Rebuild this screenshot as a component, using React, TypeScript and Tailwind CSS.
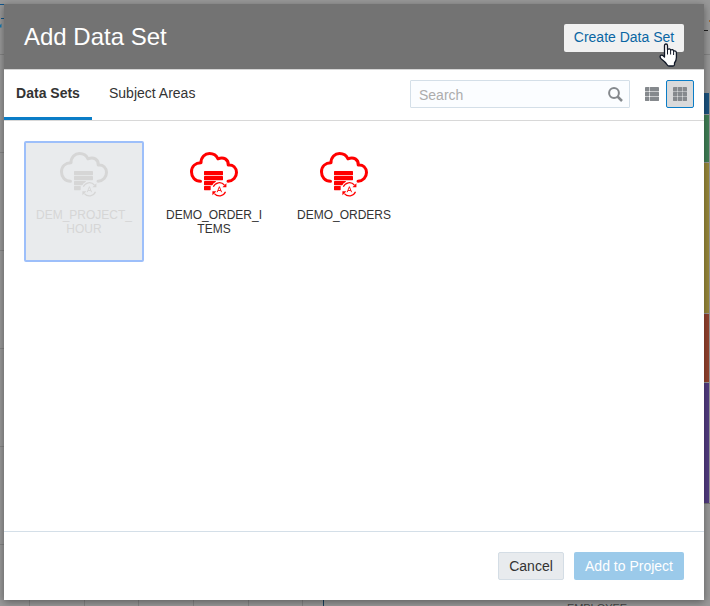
import React from "react";

const FONT = "font-['Liberation_Sans',Arial,sans-serif]";

function CloudIcon() {
  return (
    <svg width="50" height="47" viewBox="0 0 50 47" fill="none">
      <path
        d="M11.500 30.200C6 30.200 2.500 26 2.500 21C2.500 15.500 6.500 12 12 11.800C12 6 16 2.500 20.500 2.500C24.500 2.500 27.500 4.500 29 7.800C34.500 5.300 39.700 8.500 39.200 14C44 13.300 47.500 16.800 47.500 21.500C47.500 26 44 30 39 30.200"
        stroke="currentColor"
        strokeWidth="3"
        strokeLinecap="round"
        strokeLinejoin="round"
      />
      <g fill="currentColor">
        <rect x="15" y="20" width="19" height="4.200" rx=".6" />
        <rect x="15" y="25" width="19" height="4.200" rx=".6" />
        <rect x="15" y="30" width="12" height="4.200" rx=".6" />
        <rect x="15" y="35" width="6.700" height="4.200" rx=".6" />
      </g>
      <circle cx="30.400" cy="38.300" r="8.300" className="fill-(--tile)" />
      <path d="M24.300 35.800A6.600 6.600 0 0 1 35.400 34M36.500 40.800A6.600 6.600 0 0 1 25.400 42.600" stroke="currentColor" strokeWidth="1.200" />
      <path d="M37.400 32.300V36.300H33.400ZM23.400 44.300V40.300H27.400Z" fill="currentColor" />
      <path d="M28.200 41.200L30.400 35.700L32.600 41.200M29 39.500H31.800" stroke="currentColor" strokeWidth=".9" />
    </svg>
  );
}

function Tile({ lines, selected = false }: { lines: string[]; selected?: boolean }) {
  return (
    <div
      className={
        "flex h-[121px] w-[120px] flex-col items-center rounded-[2px] border-2 pt-[8px] " +
        (selected
          ? "border-[#9dbffa] bg-[#e9ebed] text-[#d6d6d6] [--tile:#e9ebed]"
          : "border-transparent text-[#ff0000] [--tile:#ffffff]")
      }
    >
      <CloudIcon />
      <div className={"mt-[10px] text-center text-[12px] leading-[14px] " + (selected ? "text-[#d6d6d6]" : "text-[#333]")}>
        {lines.map((line) => (
          <div key={line}>{line}</div>
        ))}
      </div>
    </div>
  );
}

function ListIcon() {
  return (
    <svg width="14" height="14" fill="#85898d">
      {[0, 4.850, 9.700].map((y) => (
        <React.Fragment key={y}>
          <rect y={y} width="4.300" height="4.300" rx=".4" />
          <rect x="4.850" y={y} width="9.150" height="4.300" rx=".4" />
        </React.Fragment>
      ))}
    </svg>
  );
}

function GridIcon() {
  return (
    <svg width="14" height="14" fill="#85898d">
      {[0, 4.850, 9.700].map((y) =>
        [0, 4.850, 9.700].map((x) => <rect key={x + "-" + y} x={x} y={y} width="4.300" height="4.300" rx=".4" />),
      )}
    </svg>
  );
}

function Backdrop() {
  return (
    <svg className="absolute inset-0" width="710" height="606">
      <rect width="710" height="606" fill="#999" />
      {[54, 152, 250, 348, 446, 544].map((y) => (
        <rect key={y} y={y} width="4" height="1" fill="#858585" />
      ))}
      <path d="M0 4.500H4M1 18.500H4" stroke="#10568c" />
      <path d="M0 27.500V25L1.500 23.500V27.500Z" fill="#1678ae" />
      {[29, 84, 138, 193, 248, 302].map((x) => (
        <rect key={x} x={x} y="600" width="1" height="6" fill="#858585" />
      ))}
      <rect x="323" y="600" width="1" height="6" fill="#173e5c" />
      <path d="M704 54.500H710" stroke="#858585" />
      <path d="M704 30.500H708" stroke="#222" />
      <rect x="709" y="20" width="1" height="2" fill="#a66b32" />
      <rect x="704" y="93" width="5" height="21" fill="#1b5480" />
      <rect x="704" y="115" width="5" height="47" fill="#418157" />
      <rect x="704" y="163" width="5" height="150" fill="#9a8a3b" />
      <rect x="704" y="314" width="5" height="68" fill="#94422e" />
      <rect x="704" y="383" width="5" height="120" fill="#523c82" />
      <path d="M704 503.500H710" stroke="#777" />
      <text x="567" y="611.500" fontSize="11" fill="#444" textLength="60">
        EMPLOYEE
      </text>
    </svg>
  );
}

function HandCursor() {
  return (
    <svg className="absolute top-[43px] left-[659px]" width="19" height="24" viewBox="0 0 19 24">
      <path
        d="M5.500 14V2.700Q5.500 1 7 1Q8.500 1 8.500 2.700V6.500Q10.800 5 11.700 7Q13.700 5.800 14.700 8Q17.400 7.300 17.400 10V14.500Q17.400 17.500 15.500 20V21.500Q15.500 23 14 23H10Q8.800 23 8.300 22Q6.500 19 2.300 16Q0.500 14.500 1.300 12.800Q2.500 11 5.500 14Z"
        fill="white"
        stroke="#111827"
        strokeWidth="1.300"
        strokeLinejoin="round"
      />
      <path d="M8.500 6V11.500M11.600 7V11.500M14.600 8V12" stroke="#111827" />
    </svg>
  );
}

export default function App() {
  return (
    <div className={"relative h-[606px] w-[710px] overflow-hidden p-[4px] " + FONT}>
      <Backdrop />
      <div className="relative flex h-[596px] w-[700px] flex-col bg-white shadow-[0_2px_8px_rgba(0,0,0,0.4)]">
        <header className="flex h-[66px] shrink-0 items-center justify-between border-b border-[#d5d5d5] bg-[#737373] pr-[20px] pl-[20px]">
          <h1 className="text-[24px] leading-[28px] text-white">Add Data Set</h1>
          <button className="mt-[2px] h-[28px] w-[120px] rounded-[2px] bg-[#f1f1f1] text-[14px] text-[#0a66a3]">
            <span className="whitespace-nowrap">Create Data Set</span>
          </button>
        </header>
        <nav className="flex h-[51px] shrink-0 border-b border-[#d8d8d8]">
          <div className="h-[50px] w-[88px] border-b-3 border-[#0a7dc7] pt-[13px] text-center text-[14px] leading-[20px] font-bold text-[#333]">Data Sets</div>
          <div className="pt-[13px] pl-[17px] text-[14px] leading-[20px] text-[#333]">Subject Areas</div>
          <div className="mt-[10px] ml-auto flex h-[28px] w-[220px] items-center justify-between rounded-[1px] border border-[#d4dfe8] bg-[#fbfdff] pr-[6px] pl-[8px] text-[14px] text-[#acacac]">
            <span className="pt-[2px]">Search</span>
            <svg width="15" height="15" fill="none" stroke="#85898d">
              <circle cx="6" cy="6" r="4.900" strokeWidth="2" />
              <path d="M9.500 9.500L14 14" strokeWidth="2.500" />
            </svg>
          </div>
          <div className="mt-[10px] mr-[10px] ml-[8px] flex">
            <div className="flex h-[28px] w-[28px] items-center justify-center">
              <ListIcon />
            </div>
            <div className="flex h-[28px] w-[28px] items-center justify-center rounded-[2px] border border-[#0a7dc7] bg-[#d9dadb]">
              <GridIcon />
            </div>
          </div>
        </nav>
        <main className="flex flex-1 gap-[10px] pt-[20px] pl-[20px]">
          <Tile lines={["DEM_PROJECT_", "HOUR"]} selected />
          <Tile lines={["DEMO_ORDER_I", "TEMS"]} />
          <Tile lines={["DEMO_ORDERS"]} />
        </main>
        <footer className="flex h-[69px] shrink-0 items-center justify-end gap-[10px] border-t border-[#d4dfe8] pr-[20px] text-[14px]">
          <button className="h-[28px] w-[66px] rounded-[2px] border border-[#d4dde5] bg-[#e8ebee] text-[#333]">Cancel</button>
          <button className="h-[28px] w-[110px] rounded-[2px] bg-[#9bcaea] text-white">Add to Project</button>
        </footer>
      </div>
      <HandCursor />
    </div>
  );
}
